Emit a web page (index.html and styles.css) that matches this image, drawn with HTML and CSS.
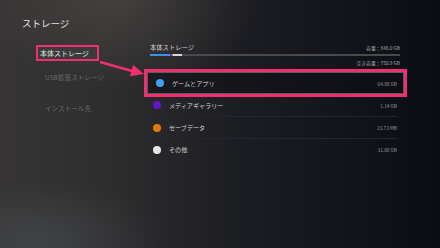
FILE: index.html
```html
<!DOCTYPE html>
<html lang="ja">
<head>
<meta charset="utf-8">
<link rel="stylesheet" href="styles.css">
</head>
<body>
<div class="screen">
  <div class="side">
    <div class="title">ストレージ</div>
    <div class="menu">
      <div class="mi mi-active">本体ストレージ</div>
      <div class="mi mi-usb">USB拡張ストレージ</div>
      <div class="mi mi-inst">インストール先</div>
    </div>
  </div>
  <div class="main">
    <div class="head">
      <span class="h-title">本体ストレージ</span>
      <span class="small">容量：848.0 GB</span>
    </div>
    <div class="bar">
      <span class="seg seg-blue"></span><span class="seg seg-purple"></span><span class="seg seg-orange"></span><span class="seg seg-white"></span>
    </div>
    <div class="free small">空き容量：750.9 GB</div>
    <div class="rows">
      <div class="row row-sel">
        <span class="dot dot-blue"></span><span class="label">ゲームとアプリ</span><span class="val">64.88 GB</span>
      </div>
      <div class="row row-plain">
        <span class="dot dot-purple"></span><span class="label">メディアギャラリー</span><span class="val">1.14 GB</span>
      </div>
      <div class="row row-plain row-sep">
        <span class="dot dot-orange"></span><span class="label">セーブデータ</span><span class="val">23.73 MB</span>
      </div>
      <div class="row row-plain row-sep">
        <span class="dot dot-white"></span><span class="label">その他</span><span class="val">31.00 GB</span>
      </div>
    </div>
  </div>
</div>
<svg class="arrow" width="440" height="248" viewBox="0 0 440 248">
  <line x1="100" y1="62" x2="133" y2="71.2" stroke="#f0306e" stroke-width="2.6"/>
  <polygon points="144,74 133.1,64.7 129.9,76.3" fill="#f0306e"/>
</svg>
</body>
</html>
```
FILE: styles.css
```css
html, body {
  margin: 0;
  padding: 0;
}
body {
  width: 440px;
  height: 248px;
  overflow: hidden;
  position: relative;
  font-family: "Noto Sans CJK JP", "Noto Sans", sans-serif;
  background:
    radial-gradient(ellipse 120px 60px at 40px 240px, rgba(80,88,92,0.45), rgba(80,88,92,0) 100%),
    radial-gradient(ellipse 140px 90px at 120px 0px, rgba(110,100,92,0.35), rgba(110,100,92,0) 100%),
    linear-gradient(to right, #363434 0%, #2e2d2e 25%, #1c1d22 55%, #12141b 80%, #0b0d15 100%);
}
.screen {
  display: flex;
  width: 440px;
  height: 248px;
}
.side {
  width: 144px;
  padding-left: 22px;
  box-sizing: border-box;
}
.title {
  margin-top: 16px;
  height: 14px;
  line-height: 14px;
  font-size: 9.5px;
  color: #e2e2e2;
}
.menu {
  display: flex;
  flex-direction: column;
  align-items: flex-start;
}
.mi {
  font-size: 6.6px;
  line-height: 16px;
  height: 16px;
  color: #6a6a6a;
  white-space: nowrap;
}
.mi-active {
  margin-top: 15px;
  margin-left: 14px;
  height: 16px;
  line-height: 12px;
  box-sizing: border-box;
  border: 2px solid #f0306e;
  background: #3c3b3c;
  color: #e8e8e8;
  padding: 0 8px 0 2px;
  font-size: 7px;
}
.mi-usb {
  margin-top: 8px;
  margin-left: 23px;
}
.mi-inst {
  margin-top: 15px;
  margin-left: 23px;
}
.main {
  width: 263px;
  padding-top: 42px;
}
.head {
  display: flex;
  justify-content: space-between;
  align-items: center;
  height: 10px;
  margin: 0 7px 0 6px;
}
.h-title {
  font-size: 6.3px;
  color: #d0d0d0;
}
.small {
  font-size: 4.8px;
  color: #a8a8a8;
}
.bar {
  display: flex;
  height: 2px;
  margin: 2px 7px 0 6px;
  background: #4a4a4c;
}
.seg { height: 2px; }
.seg-blue { width: 20px; background: #3a90ea; }
.seg-purple { width: 1.5px; background: #7a2ad8; }
.seg-orange { width: 1.5px; background: #e07a18; }
.seg-white { width: 9px; background: #d8d8d8; }
.free {
  text-align: right;
  margin: 3px 7px 0 0;
  height: 8px;
  line-height: 8px;
}
.rows {
  margin-top: 5px;
}
.row {
  display: flex;
  align-items: center;
  height: 22px;
  box-sizing: border-box;
}
.row-sel {
  margin: 0 3px;
  padding: 0 6px 0 8px;
  border: 1px solid #5c5c60;
  background: rgba(14,15,20,0.55);
  outline: 3px solid #f0306e;
}
.row-plain {
  margin: 0 10px 0 5px;
  padding-left: 4px;
}
.row-sep {
  border-top: 1px solid #25272e;
}
.dot {
  width: 8px;
  height: 8px;
  border-radius: 50%;
  flex: none;
}
.dot-blue { background: #3fa0f6; }
.dot-purple { background: #6614cc; }
.dot-orange { background: #e27a12; }
.dot-white { background: #e6e6e6; }
.label {
  margin-left: 8px;
  font-size: 6.1px;
  color: #d6d6d6;
  flex: 1;
}
.val {
  font-size: 4.8px;
  color: #9a9a9a;
}
.arrow {
  position: absolute;
  left: 0;
  top: 0;
  pointer-events: none;
}
```
